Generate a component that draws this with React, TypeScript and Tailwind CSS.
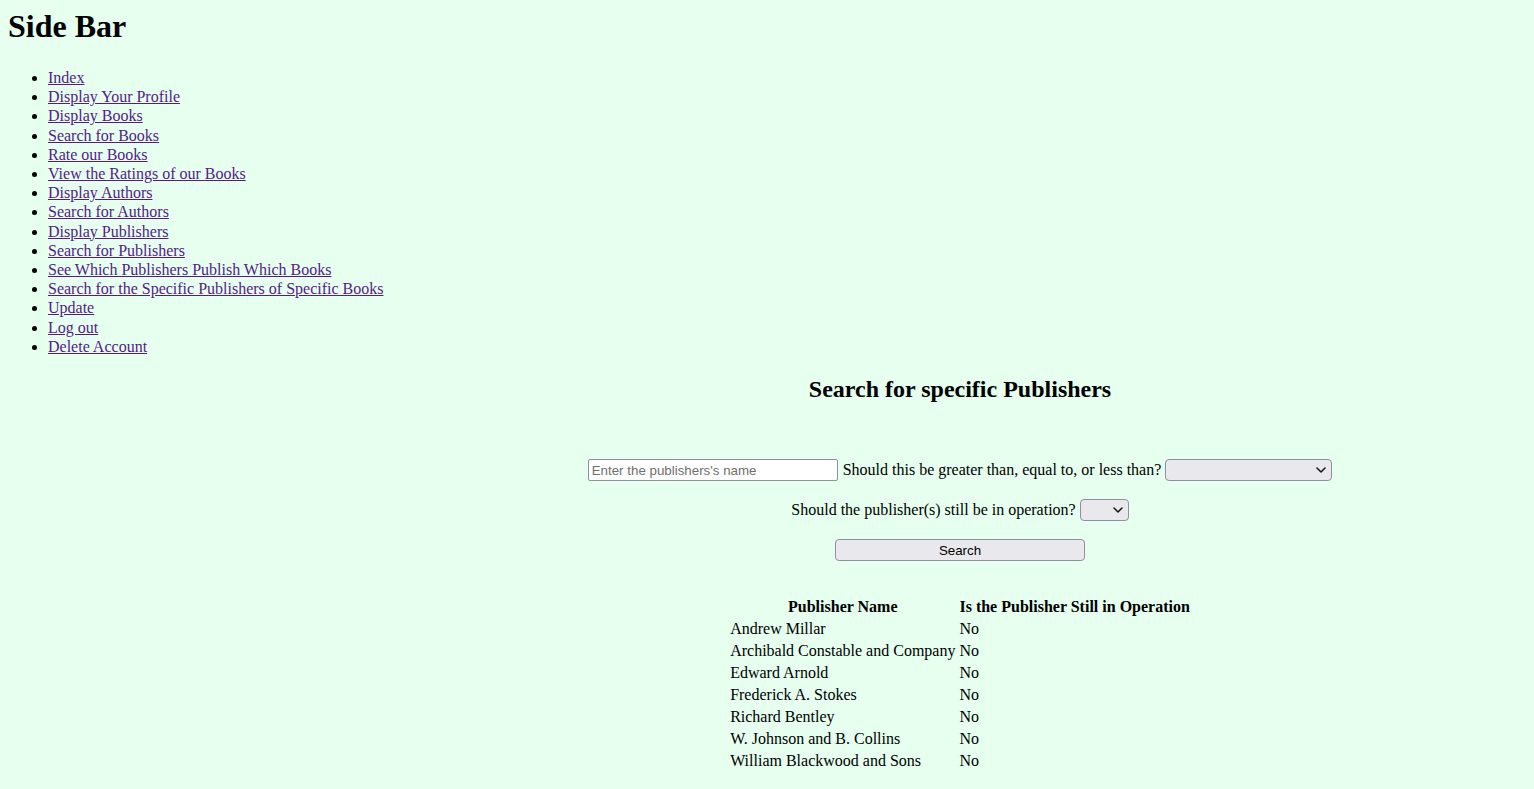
import React from "react";

const links = [
  "Index",
  "Display Your Profile",
  "Display Books",
  "Search for Books",
  "Rate our Books",
  "View the Ratings of our Books",
  "Display Authors",
  "Search for Authors",
  "Display Publishers",
  "Search for Publishers",
  "See Which Publishers Publish Which Books",
  "Search for the Specific Publishers of Specific Books",
  "Update",
  "Log out",
  "Delete Account",
];

const rows = [
  "Andrew Millar",
  "Archibald Constable and Company",
  "Edward Arnold",
  "Frederick A. Stokes",
  "Richard Bentley",
  "W. Johnson and B. Collins",
  "William Blackwood and Sons",
];

function Chevron() {
  return (
    <svg
      className="pointer-events-none absolute right-[6px] top-1/2 -translate-y-1/2"
      width="10"
      height="6"
      viewBox="0 0 10 6"
      fill="none"
    >
      <path d="M1 1 L5 5 L9 1" stroke="#1a1a1a" strokeWidth="1.6" strokeLinecap="round" strokeLinejoin="round" />
    </svg>
  );
}

function FakeSelect({ width }: { width: string }) {
  return (
    <span className={`relative flex h-[22px] ${width}`}>
      <select className="block h-[22px] w-full appearance-none rounded-[4px] border border-[#8f8f9d] bg-[#e9e9ed] font-['Liberation_Sans',sans-serif] text-[13.33px] outline-none">
        <option></option>
      </select>
      <Chevron />
    </span>
  );
}

export default function App() {
  return (
    <div className="min-h-screen bg-[#e6ffef] pl-2 pt-2 pb-6 font-['Liberation_Serif','Times_New_Roman',serif] text-[16px] text-black">
      <h1 className="text-[32px] font-bold leading-[37px]">Side Bar</h1>
      <ul className="mt-[23px] list-disc pl-10">
        {links.map((l) => (
          <li key={l} className="leading-[19.2px]">
            <a href="#" className="text-[#551a8b] underline">
              {l}
            </a>
          </li>
        ))}
      </ul>
      <main className="ml-[378px] mt-[19px] flex flex-col items-center">
        <h2 className="text-[24px] font-bold leading-[28px]">Search for specific Publishers</h2>
        <div className="mt-[56px] flex items-center">
          <input
            type="text"
            placeholder="Enter the publishers's name"
            className="block h-[22px] w-[250px] rounded-[2px] border border-[#8f8f9d] bg-white px-[3px] font-['Liberation_Sans',sans-serif] text-[13.33px] placeholder:text-[#6f6f6f] outline-none"
          />
          <span className="ml-[5px] mr-[4px] leading-[22px]">Should this be greater than, equal to, or less than?</span>
          <FakeSelect width="w-[167px]" />
        </div>
        <div className="mt-[18px] flex items-center">
          <span className="mr-[4px] leading-[22px]">Should the publisher(s) still be in operation?</span>
          <FakeSelect width="w-[49px]" />
        </div>
        <button
          type="button"
          className="mt-[18px] h-[22px] w-[250px] rounded-[4px] border border-[#8f8f9d] bg-[#e9e9ed] font-['Liberation_Sans',sans-serif] text-[13.33px] leading-[21px] text-black"
        >
          Search
        </button>
        <table className="mt-[34px] border-separate border-spacing-[2px]">
          <thead>
            <tr>
              <th className="p-[1px] text-center font-bold leading-[18px]">Publisher Name</th>
              <th className="p-[1px] text-center font-bold leading-[18px]">Is the Publisher Still in Operation</th>
            </tr>
          </thead>
          <tbody>
            {rows.map((r) => (
              <tr key={r}>
                <td className="p-[1px] text-left leading-[18px]">{r}</td>
                <td className="p-[1px] text-left leading-[18px]">No</td>
              </tr>
            ))}
          </tbody>
        </table>
      </main>
    </div>
  );
}
